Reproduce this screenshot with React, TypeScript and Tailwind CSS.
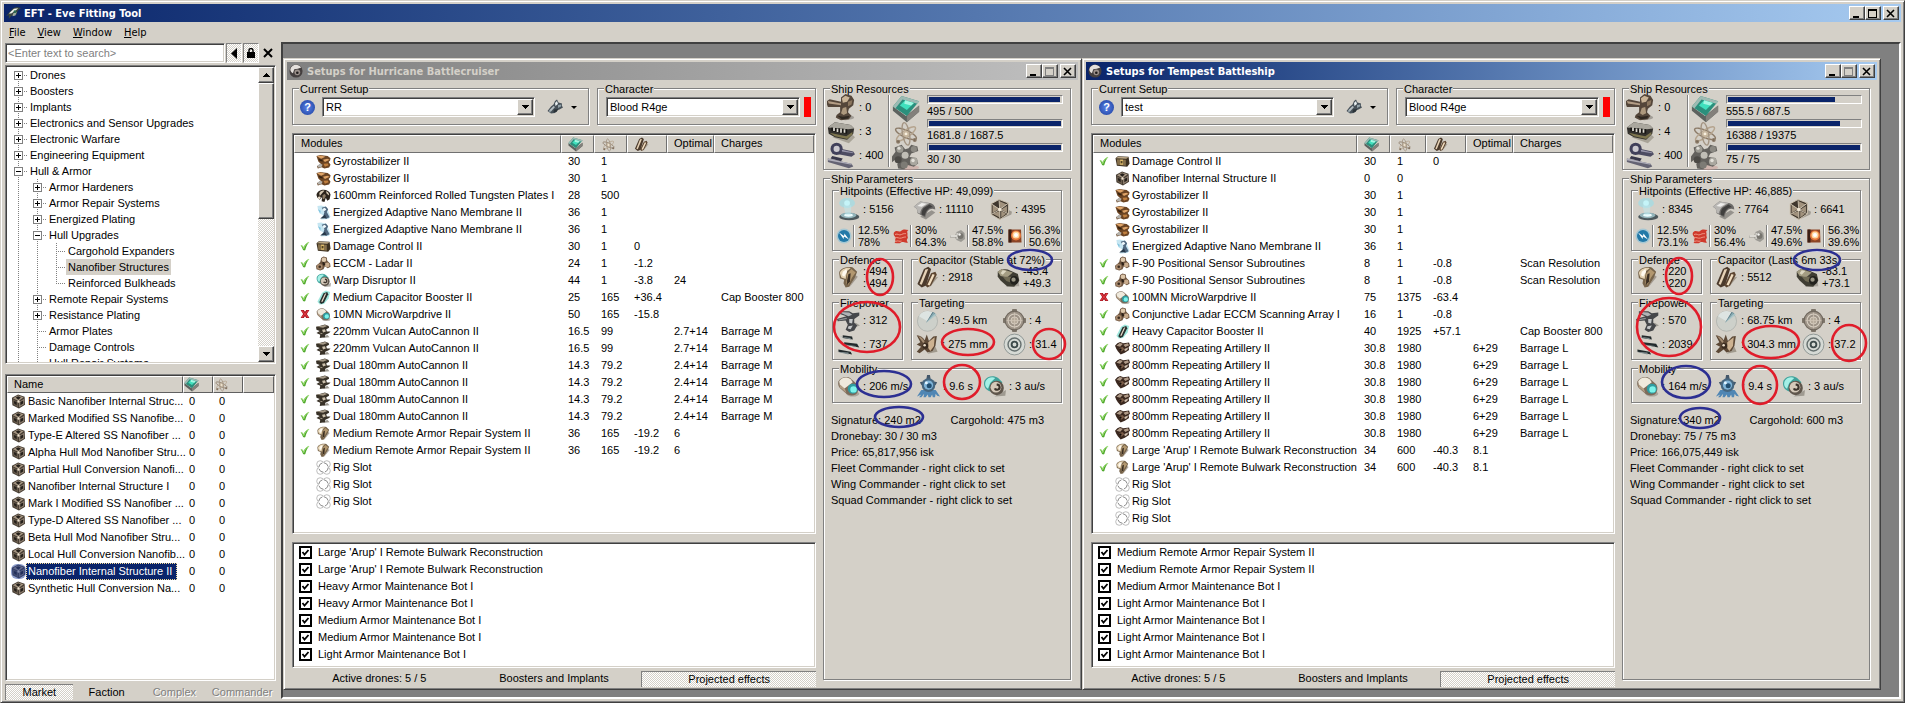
import React, { useState } from 'react';

type Status = 'on' | 'off' | '';
type ModuleRow = [Status, string, string, string, string, string, string, string];
type Ring = [string, number, number, number, number];

interface Setup {
  title: string;
  active: boolean;
  name: string;
  powerCol: string;
  modules: ModuleRow[];
  drones: string[];
  launchers: string;
  bars: [string, string, number][];
  ehp: string;
  hp: string[];
  resists: [string, string, string][];
  defence: string;
  capTitle: string;
  capacity: string;
  drain: string;
  gain: string;
  dps: string;
  volley: string;
  range: string;
  scan: string;
  sensor: string;
  speed: string;
  align: string;
  signature: string;
  cargo: string;
  dronebay: string;
  price: string;
  rings: Ring[];
}

const SUNKEN =
  'border border-t-[#808080] border-l-[#808080] border-r-white border-b-white p-px shadow-[inset_1px_1px_0_#404040,inset_-1px_-1px_0_#d4d0c8]';
const RAISED =
  'border border-t-white border-l-white border-r-[#404040] border-b-[#404040] bg-[#d4d0c8] shadow-[inset_-1px_-1px_0_#808080]';
const FRAME =
  'border border-t-[#d4d0c8] border-l-[#d4d0c8] border-r-[#404040] border-b-[#404040] bg-[#d4d0c8] p-[3px] shadow-[inset_1px_1px_0_#fff,inset_-1px_-1px_0_#808080]';
const DITHER = 'bg-[conic-gradient(#fff_25%,#d4d0c8_0_50%,#fff_0_75%,#d4d0c8_0)] bg-[length:2px_2px]';
const TITLE_FONT = "font-['DejaVu_Sans_Condensed','DejaVu_Sans',sans-serif] font-bold text-[11px]";
const RED = '#e01c2a';
const BLUE = '#2c2f92';

const repeat = (n: number, row: ModuleRow) => Array.from({ length: n }, () => row);

const hurricane: Setup = {
  title: 'Setups for Hurricane Battlecruiser',
  active: false,
  name: 'RR',
  powerCol: 'w-[33px]',
  modules: [
    ...repeat(2, ['', 'gyro', 'Gyrostabilizer II', '30', '1', '', '', '']),
    ['', 'plate', '1600mm Reinforced Rolled Tungsten Plates I', '28', '500', '', '', ''],
    ...repeat(2, ['', 'membrane', 'Energized Adaptive Nano Membrane II', '36', '1', '', '', '']),
    ['on', 'control', 'Damage Control II', '30', '1', '0', '', ''],
    ['on', 'eccm', 'ECCM - Ladar II', '24', '1', '-1.2', '', ''],
    ['on', 'warp', 'Warp Disruptor II', '44', '1', '-3.8', '24', ''],
    ['on', 'booster', 'Medium Capacitor Booster II', '25', '165', '+36.4', '', 'Cap Booster 800'],
    ['off', 'engine', '10MN MicroWarpdrive II', '50', '165', '-15.8', '', ''],
    ...repeat(2, ['on', 'cannon', '220mm Vulcan AutoCannon II', '16.5', '99', '', '2.7+14', 'Barrage M']),
    ...repeat(4, ['on', 'cannon', 'Dual 180mm AutoCannon II', '14.3', '79.2', '', '2.4+14', 'Barrage M']),
    ...repeat(2, ['on', 'repair', 'Medium Remote Armor Repair System II', '36', '165', '-19.2', '6', '']),
    ...repeat(3, ['', 'rig', 'Rig Slot', '', '', '', '', '']),
  ],
  drones: [
    "Large 'Arup' I Remote Bulwark Reconstruction",
    "Large 'Arup' I Remote Bulwark Reconstruction",
    'Heavy Armor Maintenance Bot I',
    'Heavy Armor Maintenance Bot I',
    'Medium Armor Maintenance Bot I',
    'Medium Armor Maintenance Bot I',
    'Light Armor Maintenance Bot I',
  ],
  launchers: '3',
  bars: [
    ['cpu', '495 / 500', 99],
    ['power', '1681.8 / 1687.5', 100],
    ['dronebay', '30 / 30', 100],
  ],
  ehp: '49,099',
  hp: ['5156', '11110', '4395'],
  resists: [
    ['em', '12.5%', '78%'],
    ['thermal', '30%', '64.3%'],
    ['kinetic', '47.5%', '58.8%'],
    ['explosive', '56.3%', '50.6%'],
  ],
  defence: '494',
  capTitle: 'Capacitor (Stable at 72%)',
  capacity: '2918',
  drain: '-43.4',
  gain: '+49.3',
  dps: '312',
  volley: '737',
  range: '49.5 km',
  scan: '275 mm',
  sensor: '31.4',
  speed: '206 m/s',
  align: '9.6 s',
  signature: '240 m2',
  cargo: '475 m3',
  dronebay: '30 / 30 m3',
  price: '65,817,956 isk',
  rings: [
    [RED, 57, 196, 13, 18],
    [BLUE, 207, 179, 22, 10],
    [RED, 44, 246, 33, 25],
    [RED, 145, 261, 26, 13],
    [RED, 226, 263, 16, 15],
    [BLUE, 61, 303, 27, 13],
    [RED, 139, 301, 18, 17],
    [BLUE, 76, 336, 24, 10],
  ],
};

const tempest: Setup = {
  title: 'Setups for Tempest Battleship',
  active: true,
  name: 'test',
  powerCol: 'w-[36px]',
  modules: [
    ['on', 'control', 'Damage Control II', '30', '1', '0', '', ''],
    ['', 'nano', 'Nanofiber Internal Structure II', '0', '0', '', '', ''],
    ...repeat(3, ['', 'gyro', 'Gyrostabilizer II', '30', '1', '', '', '']),
    ['', 'membrane', 'Energized Adaptive Nano Membrane II', '36', '1', '', '', ''],
    ...repeat(2, ['on', 'eccm', 'F-90 Positional Sensor Subroutines', '8', '1', '-0.8', '', 'Scan Resolution']),
    ['off', 'engine', '100MN MicroWarpdrive II', '75', '1375', '-63.4', '', ''],
    ['on', 'eccm', 'Conjunctive Ladar ECCM Scanning Array I', '16', '1', '-0.8', '', ''],
    ['on', 'booster', 'Heavy Capacitor Booster II', '40', '1925', '+57.1', '', 'Cap Booster 800'],
    ...repeat(6, ['on', 'artillery', '800mm Repeating Artillery II', '30.8', '1980', '', '6+29', 'Barrage L']),
    ...repeat(2, ['on', 'repair', "Large 'Arup' I Remote Bulwark Reconstruction", '34', '600', '-40.3', '8.1', '']),
    ...repeat(3, ['', 'rig', 'Rig Slot', '', '', '', '', '']),
  ],
  drones: [
    'Medium Remote Armor Repair System II',
    'Medium Remote Armor Repair System II',
    'Medium Armor Maintenance Bot I',
    'Light Armor Maintenance Bot I',
    'Light Armor Maintenance Bot I',
    'Light Armor Maintenance Bot I',
    'Light Armor Maintenance Bot I',
  ],
  launchers: '4',
  bars: [
    ['cpu', '555.5 / 687.5', 81],
    ['power', '16388 / 19375', 85],
    ['dronebay', '75 / 75', 100],
  ],
  ehp: '46,885',
  hp: ['8345', '7764', '6641'],
  resists: [
    ['em', '12.5%', '73.1%'],
    ['thermal', '30%', '56.4%'],
    ['kinetic', '47.5%', '49.6%'],
    ['explosive', '56.3%', '39.6%'],
  ],
  defence: '220',
  capTitle: 'Capacitor (Lasts 6m 33s)',
  capacity: '5512',
  drain: '-83.1',
  gain: '+73.1',
  dps: '570',
  volley: '2039',
  range: '68.75 km',
  scan: '304.3 mm',
  sensor: '37.2',
  speed: '164 m/s',
  align: '9.4 s',
  signature: '340 m2',
  cargo: '600 m3',
  dronebay: '75 / 75 m3',
  price: '166,075,449 isk',
  rings: [
    [RED, 57, 195, 13, 18],
    [BLUE, 195, 179, 23, 10],
    [RED, 47, 246, 32, 29],
    [RED, 149, 261, 28, 16],
    [RED, 227, 262, 17, 18],
    [BLUE, 64, 301, 24, 16],
    [RED, 138, 304, 17, 19],
    [BLUE, 78, 337, 20, 10],
  ],
};

// depth, node kind, label
const tree: [number, '+' | '-' | 'leaf' | 'last', string][] = [
  [0, '+', 'Drones'],
  [0, '+', 'Boosters'],
  [0, '+', 'Implants'],
  [0, '+', 'Electronics and Sensor Upgrades'],
  [0, '+', 'Electronic Warfare'],
  [0, '+', 'Engineering Equipment'],
  [0, '-', 'Hull & Armor'],
  [1, '+', 'Armor Hardeners'],
  [1, '+', 'Armor Repair Systems'],
  [1, '+', 'Energized Plating'],
  [1, '-', 'Hull Upgrades'],
  [2, 'leaf', 'Cargohold Expanders'],
  [2, 'leaf', 'Nanofiber Structures'],
  [2, 'last', 'Reinforced Bulkheads'],
  [1, '+', 'Remote Repair Systems'],
  [1, '+', 'Resistance Plating'],
  [1, 'leaf', 'Armor Plates'],
  [1, 'leaf', 'Damage Controls'],
  [1, 'leaf', 'Hull Repair Systems'],
];

const items = [
  'Basic Nanofiber Internal Struc...',
  'Marked Modified SS Nanofibe...',
  'Type-E Altered SS Nanofiber ...',
  'Alpha Hull Mod Nanofiber Stru...',
  'Partial Hull Conversion Nanofi...',
  'Nanofiber Internal Structure I',
  'Mark I Modified SS Nanofiber ...',
  'Type-D Altered SS Nanofiber ...',
  'Beta Hull Mod Nanofiber Stru...',
  'Local Hull Conversion Nanofib...',
  'Nanofiber Internal Structure II',
  'Synthetic Hull Conversion Na...',
];

// All drawings live on a 32 x 32 grid
const art: Record<string, React.ReactNode> = {
  cpu: (
    <>
      <path d="M1 18 17 31 31 19V12L16 24 1 13z" fill="#5d625f" />
      <path d="M1 13 11 1 31 7 17 24z" fill="#2b8f7c" />
      <path d="M1 13 11 1 31 7l-2 3-17-5-8 10z" fill="#9dbab3" />
      <path d="M9 12 15 6l10 3-8 8z" fill="#3fe0bd" />
      <path d="m15 6 10 3-3 3-8-2z" fill="#a4f7e2" />
      <path d="M17 24v7l14-12v-7z" fill="#83807b" />
    </>
  ),
  power: (
    <g fill="none" stroke="#8c7b68" strokeWidth="1.6">
      <ellipse cx="16" cy="17" rx="13" ry="4" transform="rotate(25 16 17)" />
      <ellipse cx="16" cy="17" rx="13" ry="4" transform="rotate(-35 16 17)" stroke="#b5a48e" />
      <ellipse cx="16" cy="17" rx="13" ry="4" transform="rotate(80 16 17)" stroke="#a39482" />
      <circle cx="16" cy="17" r="2.500" fill="#f7efdf" stroke="#c5b49a" />
      <circle cx="7" cy="26" r="1.500" fill="#5e5145" />
      <circle cx="26" cy="24" r="1.500" fill="#5e5145" />
    </g>
  ),
  dronebay: (
    <>
      <ellipse cx="20" cy="28" rx="11" ry="3" fill="#c99a94" opacity=".5" />
      <path d="M3 5 11 2l4 5 4-1 3-4 7 2 1 5-8 3-2 4 8 1 2 6-5 4-7-2-4 5-7-1-1-5 3-4-3-3-6 5-2-4 6-8z" fill="#63615d" />
      <circle cx="9" cy="7" r="4" fill="#9b9991" />
      <circle cx="8" cy="6" r="1.800" fill="#deddd7" />
      <circle cx="25" cy="7" r="3.500" fill="#8b8982" />
      <circle cx="7" cy="19" r="4" fill="#4b4945" />
      <circle cx="15" cy="14" r="4" fill="#c0beb6" />
      <circle cx="14" cy="25" r="4" fill="#7d7b75" />
      <circle cx="25" cy="21" r="4.500" fill="#a9a79f" />
      <circle cx="24" cy="20" r="2" fill="#e3e1da" />
    </>
  ),
  turret: (
    <>
      <ellipse cx="21" cy="28" rx="10" ry="3" fill="#8c8880" opacity=".7" />
      <path d="m0 9 3-2 13 3 0-5 5-4 7 2 3 5-1 6-5 4-1 4 4 4-3 4-9 1-6-3 1-3 4-3 0-6-14 0-1-3z" fill="#54463a" />
      <path d="m1 9 15 3v2L2 12z" fill="#b39d85" />
      <path d="m17 6 4-3 5 2-3 5-5 1z" fill="#c9b497" />
      <path d="m24 10 5-2-1 5-4 2z" fill="#8b765f" />
      <path d="m18 17 4-1 1 7-4 2-3-2z" fill="#ad987d" />
      <path d="m12 26 6 1 8-1-2 3-7 1z" fill="#2e2720" />
    </>
  ),
  launcher: (
    <>
      <path d="m6 23 19 7 7-7-4-4z" fill="#8b8577" opacity=".6" />
      <path d="m1 12 8-6 18 3 4 4-1 6-7 7-14-3-7-4z" fill="#33312d" />
      <path d="m1 12 8-6 18 3 4 4-7 1z" fill="#aaa79e" />
      <path d="m5 12 18 2v5L5 16z" fill="#151412" />
      <path d="m7 12 2 0 0 4-2 0zm4 1h2v4h-2zm4 0h2v5h-2zm4 1h2v4h-2z" fill="#dedbd2" />
      <path d="m3 18 19 4 7-5v3l-6 5-14-3z" fill="#7d754e" />
    </>
  ),
  calibration: (
    <>
      <path d="m1 20 27 6 2 3-5 2-24-7z" fill="#646373" />
      <path d="m1 20 27 6v1L1 22z" fill="#b1b0bc" />
      <path d="m12 8 18 4 2 3-4 3-15-3z" fill="#4d4c62" />
      <circle cx="11" cy="9" r="7" fill="#41405a" />
      <circle cx="11" cy="9" r="3.500" fill="#cbc9cf" />
      <path d="m17 10 13 3v1l-13-2z" fill="#9896ab" />
      <path d="m6 17 12 3-2 3-12-3z" fill="#38374a" />
    </>
  ),
  shield: (
    <>
      <ellipse cx="17" cy="26" rx="14" ry="5" fill="#4c585c" />
      <ellipse cx="16" cy="24" rx="11" ry="4" fill="#93b5bb" />
      <ellipse cx="16" cy="24" rx="6" ry="2" fill="#effeff" />
      <ellipse cx="14" cy="7" rx="11" ry="7" fill="#8fe0ee" opacity=".55" />
      <circle cx="14" cy="7" r="4" fill="#c8f6fb" opacity=".9" />
      <path d="M9 10h11l-1 14h-7z" fill="#bdeaf0" opacity=".5" />
    </>
  ),
  armor: (
    <>
      <path d="m10 26 8 4 13-10-5-3z" fill="#7a7873" opacity=".7" />
      <path d="m1 12 9-7 13 2c6 1 8 5 8 9l-4-1c-5 0-8 4-10 12L6 21c1-5-1-7-5-9z" fill="#6d6b69" />
      <path d="m1 12 9-7 13 2-9 6c-2 2-4 5-4 9l-4-2c1-4-2-7-5-8z" fill="#b8b6b3" />
      <path d="m15 14 8-5 5 4c-6 0-9 3-12 12l-4-2c0-4 1-7 3-9z" fill="#403f3e" />
      <path d="m6 11 6-4 7 1-7 4z" fill="#efeeec" />
    </>
  ),
  hull: (
    <>
      <path d="m18 29 13-6 1-4-4-2z" fill="#7d776d" opacity=".6" />
      <path d="M14 2 27 7v15l-12 8L3 23V8z" fill="#3f372e" />
      <path d="m14 4 11 5-9 6zM5 9l9 6-9 6zM25 11v9l-8-4zM5 22l10-4v9zM17 18l7 4-7 5z" fill="#a1927d" />
      <path d="M14 2 27 7v15l-12 8L3 23V8zM15 16 14 3M15 16 27 7M15 16l12 6M15 16v13M15 16 3 23M15 16 3 8" fill="none" stroke="#cfc4b1" strokeWidth="1.300" />
      <circle cx="15" cy="16" r="2.500" fill="#efe5d3" />
    </>
  ),
  nano: (
    <>
      <path d="M15 1 29 6l1 17-13 8L3 24 2 8z" fill="#463d33" />
      <path d="m15 3 12 4-11 8L4 9z" fill="#a59581" />
      <path d="M4 11 15 17v12L5 22z" fill="#6a5d4e" />
      <path d="M28 10 17 17v12l11-7z" fill="#8d7e6f" />
      <path d="m10 8 5-3 6 2-5 5zM6 15l6 2v7l-5-3zm20-1-6 3v7l6-4z" fill="#241f1a" />
      <circle cx="16" cy="16" r="2.500" fill="#f0e4d0" />
    </>
  ),
  em: (
    <>
      <circle cx="16" cy="16" r="15" fill="#78bfe0" opacity=".5" />
      <circle cx="16" cy="16" r="12" fill="#2379a8" />
      <path d="m6 9 10 7 1-5 9 12-10-6-1 5z" fill="#fff" />
    </>
  ),
  thermal: (
    <>
      <path d="M2 9c6-7 9 1 14-3s8-3 15-2c-5 4-1 6-2 9s2 5 0 8-2 5 1 8c-7 2-10-3-14 0s-8 1-13 1c4-3 0-6 2-9S-1 16 2 9z" fill="#cf3a2c" />
      <path d="M4 13c6-3 8 3 13 0s7-1 9-2M3 20c6-3 9 2 14 0s7-2 9-2M5 27c5-3 8 1 12-1" stroke="#f1a18f" strokeWidth="1.8" fill="none" />
    </>
  ),
  kinetic: (
    <>
      <path d="M0 15h10l3-7 9-4 7 6 1 12-8 6-9-4-3-5H0z" fill="#85837d" opacity=".7" />
      <path d="M1 14h12V9l10 6-10 8v-5H1z" fill="#dcdad4" />
      <circle cx="21" cy="16" r="6" fill="#77756f" />
      <circle cx="19" cy="13" r="2.500" fill="#f6f5f2" />
    </>
  ),
  explosive: (
    <>
      <path d="M3 3h25l1 26H3z" fill="#8b4526" />
      <path d="M3 3h6v26H3z" fill="#3b1f15" />
      <circle cx="18" cy="15" r="10" fill="#e8793a" />
      <circle cx="18" cy="14" r="7" fill="#ffd9a0" />
      <circle cx="18" cy="14" r="4" fill="#fff" />
    </>
  ),
  repair: (
    <>
      <path d="m17 30 12-15-3-2z" fill="#8d8377" opacity=".7" />
      <path d="M3 10c0-6 10-10 19-8l6 6-3 8-8 13-5 1-3-6 1-5-6-2z" fill="#77644b" />
      <path d="M4 10c1-5 9-9 15-7l-5 4-2 11-6-2z" fill="#e4d2b2" />
      <path d="m14 11 6-7 6 5-5 7-5 10-3-2z" fill="#b2976f" />
      <path d="m8 8 5-4 1 4-4 7-3-2z" fill="#fffaf0" />
      <path d="m16 11 3-1-1 12-4 4 0-6z" fill="#3a2e22" />
    </>
  ),
  battery: (
    <>
      <path d="m18 31 13-16-4 1z" fill="#8a8174" opacity=".7" />
      <path d="m2 25 9-21 6-3 4 3-7 23-6 3z" fill="#4b3a2c" />
      <path d="m5 25 8-20 4-1-9 22z" fill="#e6d2b6" />
      <path d="m13 27 8-17 6-2 2 4-8 15-5 3z" fill="#5c4531" />
      <path d="m16 26 7-15 3 1-7 15z" fill="#f2dfc2" />
    </>
  ),
  recharge: (
    <>
      <path d="m12 29 19-1-1-8z" fill="#8a867d" opacity=".6" />
      <path d="m1 8 6-4 8 1 14 6 2 9-7 9-10-1-9-8-4-5z" fill="#3f3d33" />
      <path d="m1 8 6-4 15 5-8 7-9-2z" fill="#a39c82" />
      <path d="m8 6 5 1-5 5-3-2z" fill="#dcd7c2" />
      <path d="m8 15 12 0-1 8-6-2z" fill="#6f6a54" />
      <circle cx="24" cy="20" r="6" fill="#22211d" />
      <circle cx="23" cy="19" r="3" fill="#9a9685" />
    </>
  ),
  guns: (
    <>
      <path d="m14 29 18-6-6-4z" fill="#88847c" opacity=".7" />
      <path d="m4 3 13 0 5 3 9-1v4l-7 5 0 5 4 4-4 7-7 2-5-3 3-7-3-6-11 1-1-3 13-4-9-3z" fill="#45474a" />
      <path d="m5 4 12 1 4 3-5 2-10-4z" fill="#b0b3b5" />
      <path d="m1 15 12-3 1 2-11 2z" fill="#8f9294" />
      <path d="m17 14 5 0-1 6-4-1zM16 24l6-1-3 5-4-1z" fill="#c6c8c9" />
    </>
  ),
  volley: (
    <>
      <path d="m8 3 13 2 1 4L8 7zM10 13l18 2 3 5-21-4zM2 23l17 3 2 4-19-4z" fill="#222a2c" />
      <path d="m4 5 15 2v2zM4 15l22 3v1zM0 26l16 1v3z" fill="#7f8c8e" />
    </>
  ),
  radar: (
    <>
      <circle cx="16" cy="17" r="14" fill="#cdd0ca" stroke="#a9ada8" />
      <path d="M16 17 24 5a14 14 0 0 0-20 5z" fill="#dde4e2" />
      <path d="m14 19 9-15 4 2z" fill="#4a6c78" />
      <path d="m14 19 10-14 5 3z" fill="#9fc3c9" opacity=".7" />
    </>
  ),
  targets: (
    <>
      <path d="M13 0h6l1 4h-8zM12 28h8l-1 4h-6zM0 13l4-1v8l-4-1zM28 12l4 1v6l-4 1z" fill="#7d756a" />
      <circle cx="16" cy="16" r="13" fill="#9d9387" stroke="#6f675d" strokeWidth="1.500" />
      <circle cx="16" cy="16" r="9" fill="none" stroke="#d9d0c3" strokeWidth="1.500" />
      <circle cx="16" cy="16" r="5" fill="#b7ac9c" stroke="#e4dccf" />
      <path d="M16 5v22M5 16h22" stroke="#cfc5b6" />
    </>
  ),
  scan: (
    <>
      <path d="m16 29 14-3-3-7z" fill="#8a8174" opacity=".7" />
      <path d="M1 3c5 0 9 3 11 7l3-8 3 9 6-6 5-1-2 14-4 7-7 2-4-4-7 5-4-2 6-7-6-3 5-3z" fill="#5c4836" />
      <path d="m17 13 9-7-1 12-5 7-3-4z" fill="#cdb291" />
      <path d="M3 4c4 1 7 4 9 8l-2 2z" fill="#a68e74" />
      <circle cx="13" cy="18" r="4" fill="#382a1f" />
      <circle cx="12" cy="17" r="1.800" fill="#efdfca" />
    </>
  ),
  sensor: (
    <g fill="none" stroke="#8b9492">
      <circle cx="16" cy="16" r="14.500" strokeWidth="1.300" fill="#d6dad5" />
      <circle cx="16" cy="16" r="9" strokeWidth="2" stroke="#66706f" />
      <circle cx="16" cy="16" r="4" strokeWidth="2.600" stroke="#3d4a4a" />
    </g>
  ),
  engine: (
    <>
      <ellipse cx="22" cy="26" rx="9" ry="4" fill="#8f8a80" opacity=".6" />
      <path d="M2 9C5 3 14 1 19 5l9 8c3 4 2 11-2 14-4 2-9 2-13-1l-9-8c-2-2-3-6-2-9z" fill="#7c6b5a" />
      <path d="M3 9c3-6 11-7 16-3l3 4-12 9-6-5z" fill="#efe9dc" />
      <path d="m3 12 8 7 2 6-9-8z" fill="#b39d84" />
      <ellipse cx="22" cy="19" rx="7" ry="7" fill="#2f9ba0" />
      <ellipse cx="23" cy="20" rx="4.500" ry="4.500" fill="#7cf3ea" />
    </>
  ),
  agility: (
    <>
      <path d="M6 21h20l6 9-4-1-2-3-1 5h-3l-1-4-2 4h-3l-1-4-3 4H9l1-5-4 5H3l3-4-6 3z" fill="#4f86b4" />
      <path d="M14 0h4l1 6h-6zM4 10l4-1 2 4-4 1zM28 10l-4-1-2 4 4 1z" fill="#45586a" />
      <circle cx="16" cy="14" r="9.500" fill="#46667f" />
      <circle cx="16" cy="14" r="6.500" fill="#7fb4d8" />
      <circle cx="17" cy="15" r="3.500" fill="#234f70" />
      <circle cx="13" cy="11" r="2" fill="#e3f4ff" />
    </>
  ),
  warp: (
    <>
      <path d="m16 30 15-1 1-8z" fill="#7c776d" opacity=".6" />
      <path d="M2 8c4-7 13-8 19-4l6 6-8 11-9 2C3 21 0 14 2 8z" fill="#3fa29b" />
      <path d="M4 8c3-5 9-6 13-4l-7 7-3 8C3 17 2 12 4 8z" fill="#a5f0e6" />
      <circle cx="19" cy="18" r="10" fill="#5f564c" />
      <circle cx="18" cy="17" r="7.500" fill="#d5c9b9" />
      <path d="M19 12a5 5 0 1 1-4 7l3-1a2 2 0 1 0 1-3z" fill="#3b332b" />
    </>
  ),
  gyro: (
    <>
      <path d="m1 4 9-2 6 1 9 1 6 5-1 5-3 3 4 6-3 6-10 2-6-3-8 3-2-5 8-5-5-5z" fill="#6b4423" />
      <path d="m2 5 9-2 9 3-9 4zM15 12l9-2 5 2-10 5z" fill="#dfa468" />
      <path d="m16 21 9-1 2 4-8 3z" fill="#c07f3f" />
      <path d="m3 25 6-5 5 3-3 6-7 0z" fill="#b5b3ae" />
      <path d="m5 10 8 2 2 4-7-1z" fill="#33200f" />
    </>
  ),
  plate: (
    <>
      <path d="M1 15C3 2 27-1 31 14l-2 10-5 3-3-6-3 9-6-2 1-9-5 6-5-4z" fill="#2b231b" />
      <path d="M7 11c2-5 8-7 11-5l-5 5-5 6zM21 7c5 1 7 5 7 9l-5-4z" fill="#d4c6b0" />
      <path d="m14 15 5-2 2 4-4 7-3-1z" fill="#8d7c66" />
      <circle cx="7" cy="21" r="3" fill="#e6dbc8" />
    </>
  ),
  membrane: (
    <>
      <path d="m3 2 8-1 12 3 3 9 5 12-4 5-17 1 5-9-7-4-4-9z" fill="#c6e6f2" />
      <path d="m12 6 9-3 5 6-3 6 6 11-8 4-5-8 2-7z" fill="#50687f" />
      <path d="m14 8 5-2 3 4-6 4z" fill="#eef9fd" />
      <path d="m9 29 10-9 4 8z" fill="#28394a" />
      <path d="m4 9 6 3-1 6z" fill="#7fc3de" />
    </>
  ),
  control: (
    <>
      <path d="m1 9 5-4 23 1 2 15-5 6-22-2z" fill="#3c3020" />
      <path d="m2 9 5-3 22 1-5 3z" fill="#bda986" />
      <path d="m4 11 19 1v13L5 23z" fill="#86704a" />
      <path d="M11 12h6v11h-6z" fill="#dcba6c" />
      <path d="M12 15h4v5h-4z" fill="#50401f" />
    </>
  ),
  eccm: (
    <>
      <path d="M11 4 16 1l7 2 1 7 6 6 1 7-6 3-6-4-3 6-7 3-8-3-1-7 6-5 3-3z" fill="#6f5640" />
      <circle cx="17" cy="8" r="5" fill="#ddc7ab" />
      <circle cx="8" cy="23" r="6" fill="#a98a6e" />
      <circle cx="8" cy="23" r="2.800" fill="#3c2d20" />
      <circle cx="24" cy="19" r="5" fill="#c9ac8d" />
      <path d="m13 14 4-1 3 5-4 3z" fill="#2d2118" />
    </>
  ),
  booster: (
    <>
      <path d="m3 25 10-19 8-5 9 3-3 14-10 12-9 1z" fill="#75dccd" opacity=".7" />
      <path d="m7 26 9-19 8-3 2 5-9 18-6 3z" fill="#28302e" />
      <path d="m11 25 8-17 3-1-8 18z" fill="#f0dccb" />
    </>
  ),
  cannon: (
    <>
      <path d="m14 30 15-2-5-5z" fill="#857f76" opacity=".8" />
      <path d="m0 6 8-2 11-3 8 3 1 4-6 3 1 5 8 0-3 3-8 4-1 5-11 2 1-7-8-4 7-4-7-3z" fill="#383127" />
      <path d="m2 6 17-4 5 2-9 4z" fill="#a79b89" />
      <path d="m13 12 6-1 2 5-6 2zM6 18l8 2-1 2z" fill="#cdc1ad" />
    </>
  ),
  artillery: (
    <>
      <path d="m0 10 5-5 6-3 7 3 12-2 2 7-3 3 1 6-9 6-9 4-6-7-3-5z" fill="#3a281f" />
      <path d="m3 10 7-6 7 2-6 6zM18 8l9-3 3 4-8 4z" fill="#b09b88" />
      <path d="m9 15 7-2 4 4-6 6z" fill="#7a5c48" />
      <path d="m20 17 8-3-2 5-5 3z" fill="#d0bfae" />
      <circle cx="12" cy="18" r="2" fill="#100b08" />
    </>
  ),
  rig: (
    <>
      <g fill="#fff" stroke="#b2b2b2" strokeWidth="1.8">
        <circle cx="9" cy="9" r="7.500" />
        <circle cx="23" cy="9" r="7.500" />
        <circle cx="9" cy="23" r="7.500" />
        <circle cx="23" cy="23" r="7.500" />
      </g>
      <circle cx="16" cy="16" r="10" fill="#fff" stroke="#868686" strokeWidth="2" strokeDasharray="12 3.700" />
    </>
  ),
  on: (
    <>
      <path d="M2 14c4-2 7 1 9 6C15 12 21 5 30 3 23 10 19 20 17 29c-2 2-5 2-7 0C8 24 6 18 2 14z" fill="#4fa82b" />
      <path d="M4 14c3 0 5 4 8 10C15 15 20 8 28 4" fill="none" stroke="#a9e67f" strokeWidth="3" />
    </>
  ),
  off: (
    <>
      <path d="M2 3h10l4 6 4-6h10l-8 13 8 13H20l-4-6-4 6H2l8-13z" fill="#a5121f" />
      <path d="m6 5 20 22M26 5 6 27" stroke="#de3a41" strokeWidth="4" />
    </>
  ),
  tools: (
    <>
      <path d="m1 24 7-9 5-4 3-7 4-3 3 6 7 2 0 5 2 3-7 4-4 1-5 6-8 1-4-3z" fill="#465058" />
      <path d="m4 23 9-9 3 2-8 9z" fill="#b5bec2" />
      <path d="m16 8 4-4 2 6-5 4z" fill="#e8eef0" />
      <path d="m22 12 7-1-1 4-6 3z" fill="#93a2a9" />
      <path d="m14 21 9-1-4 6-6 1z" fill="#2b3338" />
      <circle cx="6" cy="25" r="2" fill="#8d9ba2" />
    </>
  ),
  ship: (
    <>
      <path d="m0 22 9-11 6-6 8-3 9 2-7 6-3 9-10 2-6 6 0-8z" fill="#39453f" />
      <path d="m6 16 11-10 9-1-6 5-9 6z" fill="#eef1eb" />
      <path d="m15 16 8-3-3 7-6 2z" fill="#9fada3" />
      <circle cx="19" cy="12" r="3" fill="#2e6b53" />
    </>
  ),
  orb: (
    <>
      <circle cx="16" cy="16" r="15" fill="#443f3f" />
      <path d="M3 12c3-11 17-14 25-4l-8 3-8 1-3 9c-4-2-6-5-6-9z" fill="#e4e0dc" />
      <circle cx="19" cy="19" r="6.500" fill="#9a908b" />
      <circle cx="19" cy="20" r="3" fill="#1e1b1b" />
    </>
  ),
};

function Icon({ name, className }: { name: string; className: string }) {
  return (
    <svg viewBox="0 0 32 32" aria-hidden="true" className={`inline-block shrink-0 ${className}`}>
      {art[name]}
    </svg>
  );
}

function Arrow({ up }: { up?: boolean }) {
  return (
    <svg viewBox="0 0 7 4" className="w-[7px] h-1" shapeRendering="crispEdges" aria-hidden="true">
      <path d={up ? 'M3 0h1L7 4H0z' : 'M0 0h7L4 4H3z'} fill="#000" />
    </svg>
  );
}

function WindowButtons({ dimmed }: { dimmed?: boolean }) {
  const button = `flex h-[14px] w-4 items-center justify-center ${RAISED}`;
  return (
    <div className="flex pr-[2px]">
      <button aria-label="Minimize" className={button}>
        <svg viewBox="0 0 10 9" className="w-[10px] h-[9px]" shapeRendering="crispEdges">
          <path d="M1 7h6v2H1z" />
        </svg>
      </button>
      <button aria-label="Maximize" className={button}>
        <svg viewBox="0 0 10 9" className="w-[10px] h-[9px]" shapeRendering="crispEdges">
          <path d="M0 0h9v9H0zM1 2v6h7V2z" fillRule="evenodd" fill={dimmed ? '#808080' : '#000'} />
        </svg>
      </button>
      <button aria-label="Close" className={`ml-[2px] ${button}`}>
        <svg viewBox="0 0 10 9" className="w-[10px] h-[9px]">
          <path d="m1 1 7 7M8 1 1 8" stroke="#000" strokeWidth="1.600" />
        </svg>
      </button>
    </div>
  );
}

function Group({ label, className = '', children }: { label: string; className?: string; children: React.ReactNode }) {
  return (
    <fieldset
      className={`min-w-0 border border-[#808080] shadow-[1px_1px_0_#fff,inset_1px_1px_0_#fff] ${className}`}
    >
      <legend className="ml-[6px] bg-[#d4d0c8] px-px pt-[3px] leading-[9px] whitespace-nowrap">{label}</legend>
      {children}
    </fieldset>
  );
}

function Combo({ label, value }: { label: string; value: string }) {
  return (
    <div className={`flex h-5 min-w-0 flex-1 bg-white ${SUNKEN}`}>
      <select aria-label={label} className="min-w-0 flex-1 appearance-none bg-white pl-[2px] outline-none">
        <option>{value}</option>
      </select>
      <span className={`flex w-4 items-center justify-center ${RAISED}`}>
        <Arrow />
      </span>
    </div>
  );
}

function Stat({ icon, size = 'size-[23px]', children }: { icon: string; size?: string; children: React.ReactNode }) {
  return (
    <div className="flex items-center gap-[3px] pl-1 whitespace-nowrap">
      <Icon name={icon} className={size} />
      <span>{children}</span>
    </div>
  );
}

function TreeCell({ up, down, across, box }: { up?: boolean; down?: boolean; across?: boolean; box?: string }) {
  return (
    <svg viewBox="0 0 19 16" className="h-4 w-[19px] shrink-0" shapeRendering="crispEdges" aria-hidden="true">
      <g stroke="#808080" strokeDasharray="1 1">
        {up && <path d="M9.500 0v8" />}
        {down && <path d="M9.500 8v8" />}
        {across && <path d="M9 8.500h10" />}
      </g>
      {box && (
        <>
          <path d="M5.500 4.500h8v8h-8z" fill="#fff" stroke="#808080" />
          <path d={box === '+' ? 'M7 8.500h5M9.500 6v5' : 'M7 8.500h5'} stroke="#000" />
        </>
      )}
    </svg>
  );
}

function MarketTree() {
  const [selected, setSelected] = useState('Nanofiber Structures');

  return (
    <div className={`mt-[2px] flex h-[299px] bg-white ${SUNKEN}`}>
      <ul className="min-w-0 flex-1 overflow-hidden pl-[2px]">
        {tree.map(([depth, kind, label], i) => (
          <li key={label} className="flex h-4">
            {depth > 0 && <TreeCell up down />}
            {depth > 1 && <TreeCell up down />}
            <TreeCell up={i > 0} down={kind !== 'last'} across box={kind === '+' || kind === '-' ? kind : undefined} />
            <button
              onClick={() => setSelected(label)}
              className={`px-[2px] leading-4 whitespace-nowrap ${selected === label ? 'bg-[#d4d0c8]' : ''}`}
            >
              {label}
            </button>
          </li>
        ))}
      </ul>
      <div className={`flex w-4 flex-col ${DITHER}`}>
        <button aria-label="Scroll up" className={`flex h-4 items-center justify-center ${RAISED}`}>
          <Arrow up />
        </button>
        <div className={`h-[136px] ${RAISED}`} />
        <button aria-label="Scroll down" className={`mt-auto flex h-4 items-center justify-center ${RAISED}`}>
          <Arrow />
        </button>
      </div>
    </div>
  );
}

function ItemList() {
  const [selected, setSelected] = useState('Nanofiber Internal Structure II');
  const th = 'h-[17px] border border-t-white border-l-white border-r-[#606060] border-b-[#606060] p-0 font-normal';

  return (
    <div className={`mt-[10px] flex-1 overflow-hidden bg-white ${SUNKEN}`}>
      <table className="w-full table-fixed border-separate border-spacing-0 text-left">
        <thead className="bg-[#d4d0c8]">
          <tr>
            <th className={`w-[176px] ${th} leading-[15px]`}>
              <span className="pl-[6px]">Name</span>
            </th>
            <th className={`w-[30px] ${th}`}>
              <Icon name="cpu" className="mx-auto block size-[15px]" />
            </th>
            <th className={`w-[30px] ${th}`}>
              <Icon name="power" className="mx-auto block size-[15px]" />
            </th>
            <th className={th} />
          </tr>
        </thead>
        <tbody>
          {items.map((item) => (
            <tr key={item} onClick={() => setSelected(item)}>
              <td className="h-[17px] p-0">
                <div className="flex items-center pl-1 whitespace-nowrap">
                  <span className="relative flex">
                    <Icon name="nano" className="size-[15px]" />
                    {selected === item && <span className="absolute inset-0 rounded-md bg-[#1f3f9a]/50" />}
                  </span>
                  <span
                    className={
                      selected === item
                        ? 'border border-dotted border-[#f5db95] bg-[#0a246a] px-px pr-1 leading-[15px] text-white'
                        : 'border border-transparent px-px leading-[15px]'
                    }
                  >
                    {item}
                  </span>
                </div>
              </td>
              <td className="p-0 pl-[6px]">0</td>
              <td className="p-0 pl-[6px]">0</td>
              <td className="p-0" />
            </tr>
          ))}
        </tbody>
      </table>
    </div>
  );
}

function Sidebar() {
  const [search, setSearch] = useState('');

  return (
    <aside className="flex w-[277px] shrink-0 flex-col pt-px pr-[5px] pl-px">
      <div className="flex h-5">
        <input
          type="text"
          aria-label="Search"
          value={search}
          onChange={(e) => setSearch(e.target.value)}
          placeholder="<Enter text to search>"
          className={`min-w-0 flex-1 bg-white pl-[2px] outline-none placeholder:text-[#808080] ${SUNKEN}`}
        />
        <button
          aria-label="Back"
          className={`ml-px flex w-4 items-center justify-center border border-t-[#808080] border-l-[#808080] border-r-white border-b-white ${DITHER}`}
        >
          <svg viewBox="0 0 6 11" className="w-[6px] h-[11px]">
            <path d="M6 0v11L0 5.500z" />
          </svg>
        </button>
        <button
          aria-label="Lock"
          className={`ml-px flex w-4 items-center justify-center border border-t-[#808080] border-l-[#808080] border-r-white border-b-white ${DITHER}`}
        >
          <svg viewBox="0 0 8 10" className="w-2 h-[10px]">
            <path d="M0 4h8v6H0z" />
            <path d="M2 5V2.500a2 2 0 0 1 4 0V5" fill="none" stroke="#000" strokeWidth="1.400" />
          </svg>
        </button>
        <button aria-label="Clear" className="flex w-[17px] items-center justify-center">
          <svg viewBox="0 0 10 10" className="size-[10px]">
            <path d="m1 1 8 8M9 1 1 9" stroke="#000" strokeWidth="2" />
          </svg>
        </button>
      </div>
      <MarketTree />
      <ItemList />
      <div className="mt-[3px] grid h-[15px] grid-cols-4 leading-[15px]">
        <button className={`border-t border-l border-[#808080] ${DITHER}`}>Market</button>
        <button>Faction</button>
        <button disabled className="text-[#808080] [text-shadow:1px_1px_0_#fff]">
          Complex
        </button>
        <button disabled className="text-[#808080] [text-shadow:1px_1px_0_#fff]">
          Commander
        </button>
      </div>
    </aside>
  );
}

function ModuleTable({ setup }: { setup: Setup }) {
  const th =
    'h-[17px] border border-t-white border-l-white border-r-[#707070] border-b-[#707070] p-0 pl-[6px] font-normal leading-[15px]';

  return (
    <div className={`mt-2 flex-1 overflow-hidden bg-white ${SUNKEN}`}>
      <table className="w-full table-fixed border-separate border-spacing-0 text-left">
        <thead className="bg-[#d4d0c8]">
          <tr>
            <th className={th}>Modules</th>
            <th className={`w-[33px] ${th}`}>
              <Icon name="cpu" className="block size-[15px]" />
            </th>
            <th className={`${setup.powerCol} ${th}`}>
              <Icon name="power" className="block size-[15px]" />
            </th>
            <th className={`w-[40px] ${th}`}>
              <Icon name="battery" className="block size-[15px]" />
            </th>
            <th className={`w-[47px] ${th}`}>Optimal</th>
            <th className={`w-[100px] ${th}`}>Charges</th>
          </tr>
        </thead>
        <tbody>
          {setup.modules.map(([status, icon, name, ...values], i) => (
            <tr key={i}>
              <td className="h-[17px] p-0">
                <div className="flex items-center pl-[6px] whitespace-nowrap">
                  <span className="flex w-4">{status && <Icon name={status} className="size-[10px]" />}</span>
                  <Icon name={icon} className="size-[15px]" />
                  <span className="pl-[2px]">{name}</span>
                </div>
              </td>
              {values.map((value, j) => (
                <td key={j} className="p-0 pl-[7px] whitespace-nowrap">
                  {value}
                </td>
              ))}
            </tr>
          ))}
        </tbody>
      </table>
    </div>
  );
}

function DroneList({ drones }: { drones: string[] }) {
  return (
    <div className={`mt-2 bg-white ${SUNKEN}`}>
      <ul className="pb-[3px] pl-[5px]">
        {drones.map((drone, i) => (
          <li key={i} className="h-[17px]">
            <label className="flex h-[17px] items-center">
              <span className="relative flex">
                <input
                  type="checkbox"
                  defaultChecked
                  className="peer size-[13px] appearance-none border-2 border-black bg-white"
                />
                <svg
                  viewBox="0 0 13 13"
                  className="pointer-events-none absolute inset-0 hidden size-[13px] peer-checked:block"
                >
                  <path d="m3.500 6 2 2.500 4-4.500" fill="none" stroke="#000" strokeWidth="1.800" />
                </svg>
              </span>
              <span className="pl-[6px]">{drone}</span>
            </label>
          </li>
        ))}
      </ul>
    </div>
  );
}

function Resources({ setup }: { setup: Setup }) {
  const slots = [
    ['turret', '0'],
    ['launcher', setup.launchers],
    ['calibration', '400'],
  ];

  return (
    <Group label="Ship Resources" className="pb-[2px]">
      <div className="flex pt-px pr-[7px] pl-[3px]">
        <div className="w-[62px] border-r border-[#808080] shadow-[1px_0_0_#fff]">
          {slots.map(([icon, value]) => (
            <div key={icon} className="flex h-6 items-center gap-1 whitespace-nowrap">
              <Icon name={icon} className="size-7" />
              <span>: {value}</span>
            </div>
          ))}
        </div>
        <div className="min-w-0 flex-1 pl-[3px]">
          {setup.bars.map(([icon, text, percent]) => (
            <div key={icon} className="flex h-6 gap-[7px]">
              <Icon name={icon} className="size-7" />
              <div className="min-w-0 flex-1">
                <div
                  role="progressbar"
                  aria-valuenow={percent}
                  className="h-[9px] border border-t-[#808080] border-l-[#808080] border-r-white border-b-white p-px"
                >
                  <div className="h-full bg-[#0a246a]" style={{ width: `${percent}%` }} />
                </div>
                <div className="leading-[15px]">{text}</div>
              </div>
            </div>
          ))}
        </div>
      </div>
    </Group>
  );
}

function Parameters({ setup }: { setup: Setup }) {
  return (
    <Group label="Ship Parameters" className="flex-1">
      <div className="flex flex-col gap-[2px] px-2">
        <Group label={`Hitpoints (Effective HP: ${setup.ehp})`}>
          <div className="grid h-[26px] grid-cols-3">
            {['shield', 'armor', 'hull'].map((icon, i) => (
              <Stat key={icon} icon={icon}>
                : {setup.hp[i]}
              </Stat>
            ))}
          </div>
          <div className="grid h-7 grid-cols-4">
            {setup.resists.map(([icon, shield, armor]) => (
              <div key={icon} className="flex items-center pl-[3px]">
                <Icon name={icon} className="size-4" />
                <span className="ml-px h-[22px] border-r border-[#808080] shadow-[1px_0_0_#fff]" />
                <span className="pl-1 leading-3">
                  {shield}
                  <br />
                  {armor}
                </span>
              </div>
            ))}
          </div>
        </Group>
        <div className="grid grid-cols-[71px_1fr] gap-x-2 gap-y-[2px]">
          <Group label="Defence">
            <div className="h-7 pb-1">
              <Stat icon="repair">
                <span className="block leading-3">: {setup.defence}</span>
                <span className="block leading-3">: {setup.defence}</span>
              </Stat>
            </div>
          </Group>
          <Group label={setup.capTitle}>
            <div className="grid h-7 grid-cols-[1fr_68px] pb-1">
              <Stat icon="battery">: {setup.capacity}</Stat>
              <Stat icon="recharge">
                <span className="block leading-3">{setup.drain}</span>
                <span className="block leading-3">{setup.gain}</span>
              </Stat>
            </div>
          </Group>
          <Group label="Firepower">
            <div className="grid h-[51px] grid-rows-2 pb-[3px]">
              <Stat icon="guns">: {setup.dps}</Stat>
              <Stat icon="volley">: {setup.volley}</Stat>
            </div>
          </Group>
          <Group label="Targeting">
            <div className="grid h-[51px] grid-cols-[1fr_62px] grid-rows-2 pb-[3px]">
              <Stat icon="radar">: {setup.range}</Stat>
              <Stat icon="targets">: 4</Stat>
              <Stat icon="scan">: {setup.scan}</Stat>
              <Stat icon="sensor">: {setup.sensor}</Stat>
            </div>
          </Group>
        </div>
        <Group label="Mobility">
          <div className="grid h-7 grid-cols-[80px_66px_1fr] pb-1">
            <Stat icon="engine">: {setup.speed}</Stat>
            <Stat icon="agility">: {setup.align}</Stat>
            <Stat icon="warp">: 3 au/s</Stat>
          </div>
        </Group>
      </div>
      <div className="mt-[9px] pl-[7px] leading-4">
        <div className="grid grid-cols-2">
          <span>Signature: {setup.signature}</span>
          <span>Cargohold: {setup.cargo}</span>
        </div>
        <p>Dronebay: {setup.dronebay}</p>
        <p>Price: {setup.price}</p>
        <p>Fleet Commander - right click to set</p>
        <p>Wing Commander - right click to set</p>
        <p>Squad Commander - right click to set</p>
      </div>
    </Group>
  );
}

function SetupWindow({ setup }: { setup: Setup }) {
  return (
    <section className={`flex min-w-0 flex-1 flex-col ${FRAME}`}>
      <header
        className={`flex h-[18px] items-center justify-between bg-linear-to-r pl-[2px] ${TITLE_FONT} ${
          setup.active ? 'from-[#0a246a] to-[#a6caf0] text-white' : 'from-[#808080] to-[#c0c0c0] text-[#d4d0c8]'
        }`}
      >
        <h2 className="flex items-center gap-1">
          <Icon name="orb" className="size-[14px]" />
          {setup.title}
        </h2>
        <WindowButtons dimmed />
      </header>
      <div className="flex flex-1 gap-[7px] pt-px pr-[7px] pl-[5px]">
        <div className="flex min-w-0 flex-1 flex-col pt-px">
          <div className="grid grid-cols-[297fr_219fr] gap-2">
            <Group label="Current Setup">
              <div className="flex items-center pt-[3px] pr-[11px] pb-[7px] pl-[7px]">
                <button
                  aria-label="Help"
                  className="mr-[7px] size-[15px] rounded-full bg-radial from-[#5b84e8] to-[#1c3c9c] text-center text-[11px] leading-[15px] font-bold text-white"
                >
                  ?
                </button>
                <Combo label="Current setup" value={setup.name} />
                <button aria-label="Setup tools" className="flex items-center gap-2 pl-3">
                  <Icon name="tools" className="size-4" />
                  <svg viewBox="0 0 6 3" className="w-[6px] h-[3px]">
                    <path d="M0 0h6L3 3z" />
                  </svg>
                </button>
              </div>
            </Group>
            <Group label="Character">
              <div className="flex items-center gap-1 pt-[3px] pr-1 pb-[7px] pl-2">
                <Combo label="Character" value="Blood R4ge" />
                <span className="h-5 w-[7px] bg-[#ff0000]" />
              </div>
            </Group>
          </div>
          <ModuleTable setup={setup} />
          <DroneList drones={setup.drones} />
          <div className="mt-[2px] grid h-4 grid-cols-3 leading-[17px]">
            <button>Active drones: 5 / 5</button>
            <button>Boosters and Implants</button>
            <button className={`mt-px border-t border-l border-[#808080] leading-[15px] ${DITHER}`}>
              Projected effects
            </button>
          </div>
        </div>
        <div className="relative flex w-[248px] shrink-0 flex-col gap-[2px] pt-px pb-[6px]">
          <Resources setup={setup} />
          <Parameters setup={setup} />
          <svg className="pointer-events-none absolute inset-0 h-full w-full overflow-visible" aria-hidden="true">
            {setup.rings.map(([color, cx, cy, rx, ry], i) => (
              <ellipse key={i} cx={cx} cy={cy} rx={rx} ry={ry} fill="none" stroke={color} strokeWidth="2.600" />
            ))}
          </svg>
        </div>
      </div>
    </section>
  );
}

export default function App() {
  return (
    <div
      className={`flex min-h-screen flex-col font-['Liberation_Sans',Arial,sans-serif] text-[11px] leading-[13px] text-black ${FRAME}`}
    >
      <header
        className={`flex h-[18px] items-center justify-between bg-linear-to-r from-[#0a246a] to-[#a6caf0] pl-[2px] text-white ${TITLE_FONT}`}
      >
        <h1 className="flex items-center gap-[3px]">
          <Icon name="ship" className="size-[15px]" />
          EFT - Eve Fitting Tool
        </h1>
        <WindowButtons />
      </header>
      <nav className="flex h-5 items-center gap-3 pl-[5px] font-['DejaVu_Sans_Condensed','DejaVu_Sans',sans-serif]">
        {['File', 'View', 'Window', 'Help'].map((item) => (
          <button key={item}>
            <span className="underline">{item[0]}</span>
            {item.slice(1)}
          </button>
        ))}
      </nav>
      <div className="flex flex-1">
        <Sidebar />
        <main
          className="flex min-w-0 flex-1 border-2 border-t-[#404040] border-l-[#404040] border-r-white border-b-white bg-[#808080] pt-[14px] pr-[18px] pb-[7px]"
        >
          <SetupWindow setup={hurricane} />
          <SetupWindow setup={tempest} />
        </main>
      </div>
    </div>
  );
}
